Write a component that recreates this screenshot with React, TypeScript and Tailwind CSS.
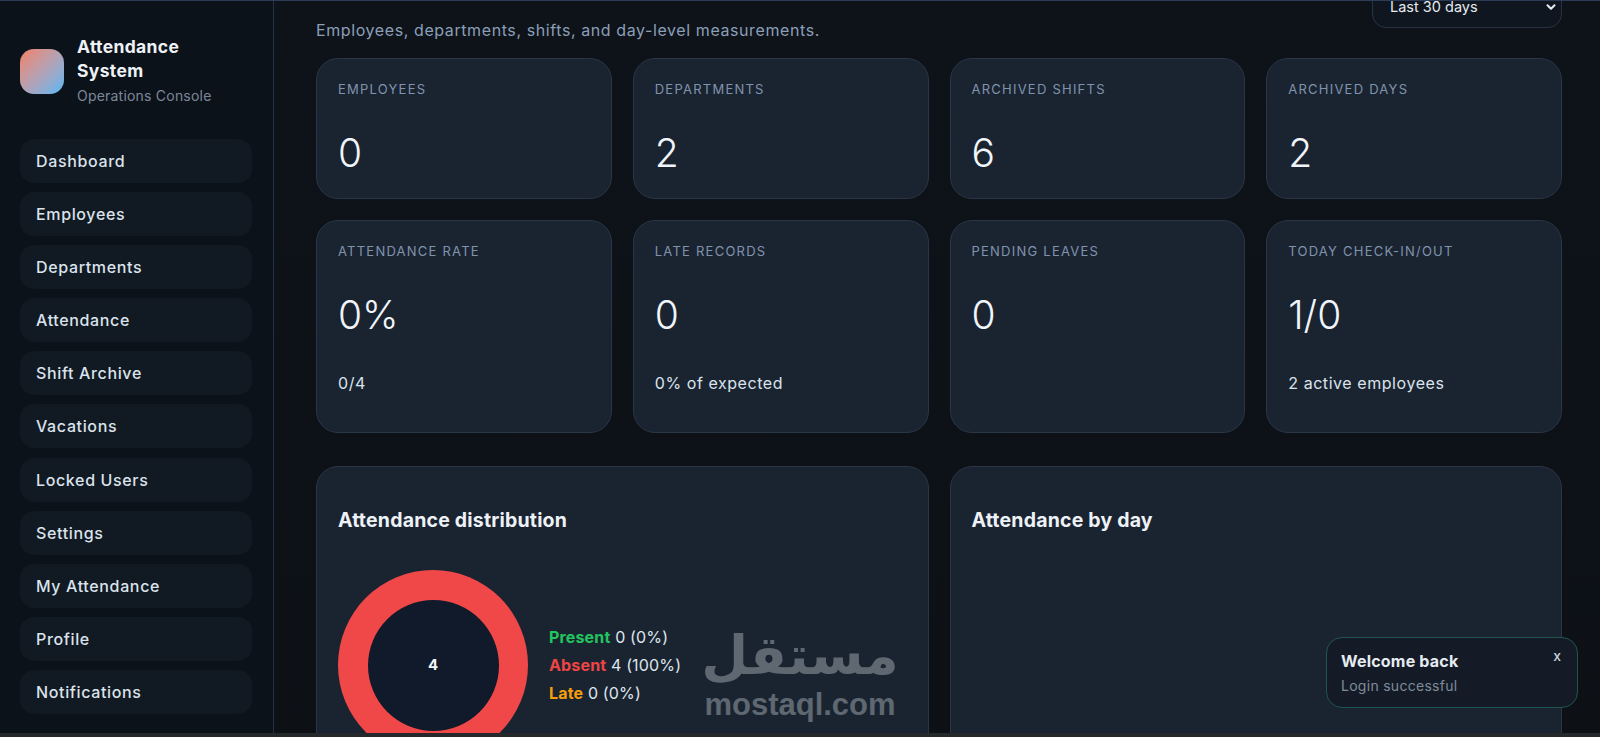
import { ChevronDown } from "lucide-react";

const nav = ["Dashboard", "Employees", "Departments", "Attendance", "Shift Archive", "Vacations", "Locked Users", "Settings", "My Attendance", "Profile", "Notifications"];

function Card({ label, value, sub }: { label: string; value: string; sub?: string }) {
  return (
    <div className="flex flex-col rounded-[22px] border border-[#2a3546] bg-[#1a2431] px-[21px] pt-[21px]">
      <div className="text-[13px] leading-[18px] tracking-[0.095em] text-[#8093ad]">{label}</div>
      <div className="mt-[31px] text-[39px] leading-[48px] font-light text-[#f1f5f9]">{value}</div>
      {sub && <div className="mt-[32px] text-[16px] leading-[24px] tracking-[0.035em] text-[#dbe3ec]">{sub}</div>}
    </div>
  );
}

export default function App() {
  return (
    <div className="relative flex h-[737px] w-[1600px] flex-col overflow-hidden bg-[#0d1117] font-['Inter','Liberation_Sans',sans-serif]">
      <div className="h-px w-full shrink-0 bg-[#2b3b58]" />
      <div className="flex min-h-0 flex-1">
        <aside className="flex w-[274px] shrink-0 flex-col border-r border-[#253042] bg-[#0c1219] pl-5 pr-[21px] pt-[34px]">
          <div className="flex items-center gap-[13px]">
            <div className="h-[45px] w-[44px] shrink-0 rounded-[14px] bg-gradient-to-br from-[#f27f65] to-[#4fb6f7]" />
            <div>
              <div className="text-[17.5px] leading-[24px] font-bold tracking-[0.02em] text-[#eef2f7]">Attendance<br />System</div>
              <div className="pt-px text-[14px] leading-[24px] tracking-[0.015em] text-[#7c8899]">Operations Console</div>
            </div>
          </div>
          <nav className="mt-[31px] flex flex-col gap-[9.1px]">
            {nav.map((n) => (
              <div key={n} className="flex h-[44px] items-center rounded-[14px] bg-[#111922] px-4 text-[16px] font-medium tracking-[0.04em] text-[#dbe3ec]">{n}</div>
            ))}
          </nav>
        </aside>
        <main className="min-w-0 flex-1 overflow-hidden bg-gradient-to-b from-[#0e1319] to-[#0d1116] pl-[42px] pr-[38px]">
          <div className="-mt-[17px] flex items-start justify-between">
            <div className="pt-[34px] text-[16px] leading-[24px] tracking-[0.037em] text-[#8b9fb8]">Employees, departments, shifts, and day-level measurements.</div>
            <div className="flex h-[44px] w-[190px] items-center justify-between rounded-[14px] border border-[#273244] bg-[#10161f] pl-[17px] pr-[2px] pt-[2px] text-[14.5px] text-[#e5eaf0]">
              <span>Last 30 days</span>
              <ChevronDown size={14} strokeWidth={3.5} className="mr-[1px] text-[#e5eaf0]" />
            </div>
          </div>
          <div className="mt-[16px] grid grid-cols-4 grid-rows-[141px_213px] gap-x-[21px] gap-y-[21px]">
            <Card label="EMPLOYEES" value="0" />
            <Card label="DEPARTMENTS" value="2" />
            <Card label="ARCHIVED SHIFTS" value="6" />
            <Card label="ARCHIVED DAYS" value="2" />
            <Card label="ATTENDANCE RATE" value="0%" sub="0/4" />
            <Card label="LATE RECORDS" value="0" sub="0% of expected" />
            <Card label="PENDING LEAVES" value="0" />
            <Card label="TODAY CHECK-IN/OUT" value="1/0" sub="2 active employees" />
          </div>
          <div className="mt-[33px] grid grid-cols-2 gap-[21px]">
            <section className="h-[400px] rounded-[22px] border border-[#2a3546] bg-[#1a2431] px-[21px] pt-[40px]">
              <h2 className="text-[19.5px] leading-[26px] font-bold tracking-[0.01em] text-[#eef2f7]">Attendance distribution</h2>
              <div className="mt-[37px] flex items-center gap-[21px]">
                <div className="flex h-[190px] w-[190px] shrink-0 items-center justify-center rounded-full bg-[#f04848]">
                  <div className="flex h-[131px] w-[131px] items-center justify-center rounded-full bg-[#111a2b] text-[15px] font-bold text-[#f1f5f9]">4</div>
                </div>
                <div className="flex flex-col gap-[4px] text-[16px] leading-[24px] tracking-[0.01em] text-[#dfe6ee]">
                  <div><span className="font-bold text-[#22c55e]">Present</span> 0 (0%)</div>
                  <div><span className="font-bold text-[#ef4444]">Absent</span> 4 (100%)</div>
                  <div><span className="font-bold text-[#f59e0b]">Late</span> 0 (0%)</div>
                </div>
              </div>
            </section>
            <section className="h-[400px] rounded-[22px] border border-[#2a3546] bg-[#1a2431] px-[21px] pt-[40px]">
              <h2 className="text-[19.5px] leading-[26px] font-bold tracking-[0.01em] text-[#eef2f7]">Attendance by day</h2>
            </section>
          </div>
        </main>
      </div>
      <div className="h-[4px] w-full shrink-0 bg-[#26292c]" />

      <div className="absolute left-[700px] top-[625px] w-[200px] text-center text-[#5f6771]">
        <div dir="rtl" lang="ar" className="font-['DejaVu_Sans',sans-serif] text-[54px] leading-[62px] font-bold">مستقل</div>
        <div className="font-['Liberation_Sans',sans-serif] text-[31px] leading-[36px] font-bold">mostaql.com</div>
      </div>

      <div className="absolute left-[1326px] top-[637px] h-[71px] w-[252px] rounded-[16px] border border-[#1f5550] bg-[#151b26] pl-[14px] pt-[11px]">
        <div className="text-[16px] leading-[24px] font-bold tracking-[0.012em] text-[#e6ebf2]">Welcome back</div>
        <div className="pt-px text-[14px] leading-[24px] tracking-[0.02em] text-[#7f8b9c]">Login successful</div>
        <div className="absolute right-[16px] top-[7px] text-[14px] font-medium text-[#cbd3dd]">x</div>
      </div>
    </div>
  );
}
